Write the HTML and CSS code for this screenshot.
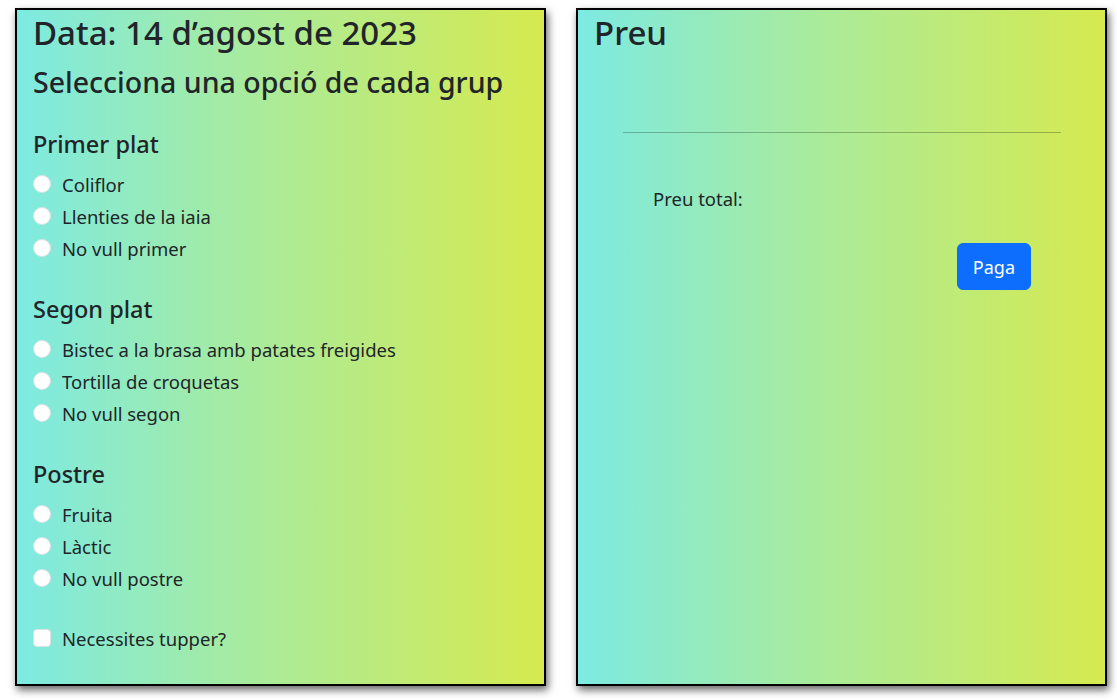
FILE: index.html
```html
<!DOCTYPE html>
<html>
<head>
    <meta charset="utf-8" />
    <title>Menú del dia</title>
    <link rel="stylesheet" href="styles.css">
</head>
<body>
    <div class="pagina">
        <form class="caixa menu">
            <h1>Data: 14 d’agost de 2023</h1>
            <h2>Selecciona una opció de cada grup</h2>

            <div class="grup">
                <h3>Primer plat</h3>
                <label class="opcio"><input type="radio" name="primer" /> Coliflor</label>
                <label class="opcio"><input type="radio" name="primer" /> Llenties de la iaia</label>
                <label class="opcio"><input type="radio" name="primer" /> No vull primer</label>
            </div>

            <div class="grup">
                <h3>Segon plat</h3>
                <label class="opcio"><input type="radio" name="segon" /> Bistec a la brasa amb patates freigides</label>
                <label class="opcio"><input type="radio" name="segon" /> Tortilla de croquetas</label>
                <label class="opcio"><input type="radio" name="segon" /> No vull segon</label>
            </div>

            <div class="grup">
                <h3>Postre</h3>
                <label class="opcio"><input type="radio" name="postre" /> Fruita</label>
                <label class="opcio"><input type="radio" name="postre" /> Làctic</label>
                <label class="opcio"><input type="radio" name="postre" /> No vull postre</label>
            </div>

            <label class="opcio tupper"><input type="checkbox" /> Necessites tupper?</label>
        </form>

        <div class="caixa preu">
            <h1>Preu</h1>
            <div id="llista"></div>
            <hr />
            <p class="total">Preu total: <span id="total"></span></p>
            <div class="botons">
                <button type="button" class="paga">Paga</button>
            </div>
        </div>
    </div>
</body>
</html>
```

FILE: styles.css
```css
* {
    box-sizing: border-box;
}

body {
    margin: 0;
    font-family: 'Noto Sans', sans-serif;
    color: #212529;
}

.pagina {
    display: flex;
    gap: 30px;
    padding: 8px 10px 14px 15px;
}

.caixa {
    flex: 1;
    height: 678px;
    border: 2px solid black;
    background: linear-gradient(to right, #7deae2, #a9eb9c 45%, #d6ea4f);
    box-shadow: 2px 4px 8px rgba(0, 0, 0, 0.6);
    padding: 3px 16px;
}

.caixa h1 {
    font-size: 33px;
    font-weight: 500;
    line-height: 40px;
    margin: 0 0 11px;
}

.menu h2 {
    font-size: 28.5px;
    font-weight: 500;
    line-height: 36px;
    margin: 0 0 29px;
}

.grup h3 {
    font-size: 23.5px;
    font-weight: 500;
    line-height: 30px;
    margin: 0 0 9px;
}

.grup {
    margin-bottom: 30px;
}

.opcio {
    display: flex;
    align-items: center;
    gap: 11px;
    font-size: 18.5px;
    height: 32px;
}

.opcio input {
    appearance: none;
    width: 18px;
    height: 18px;
    margin: 0;
    background: white;
    border: 1px solid #dee2e6;
    border-radius: 50%;
}

.opcio input[type=checkbox] {
    border-radius: 4px;
}

.tupper {
    margin-top: -2px;
}

.preu hr {
    margin: 79px 28px 0 29px;
    border: 0;
    border-top: 1px solid rgba(0, 0, 0, 0.25);
}

.total {
    font-size: 18.5px;
    line-height: 28px;
    margin: 52px 0 0 59px;
}

.botons {
    display: flex;
    justify-content: flex-end;
    padding-right: 58px;
    margin-top: 30px;
}

.paga {
    background-color: #0d6efd;
    color: white;
    border: 1px solid #0d6efd;
    border-radius: 6px;
    font-family: 'Noto Sans', sans-serif;
    font-size: 18px;
    height: 47px;
    padding: 0 15px;
}
```
